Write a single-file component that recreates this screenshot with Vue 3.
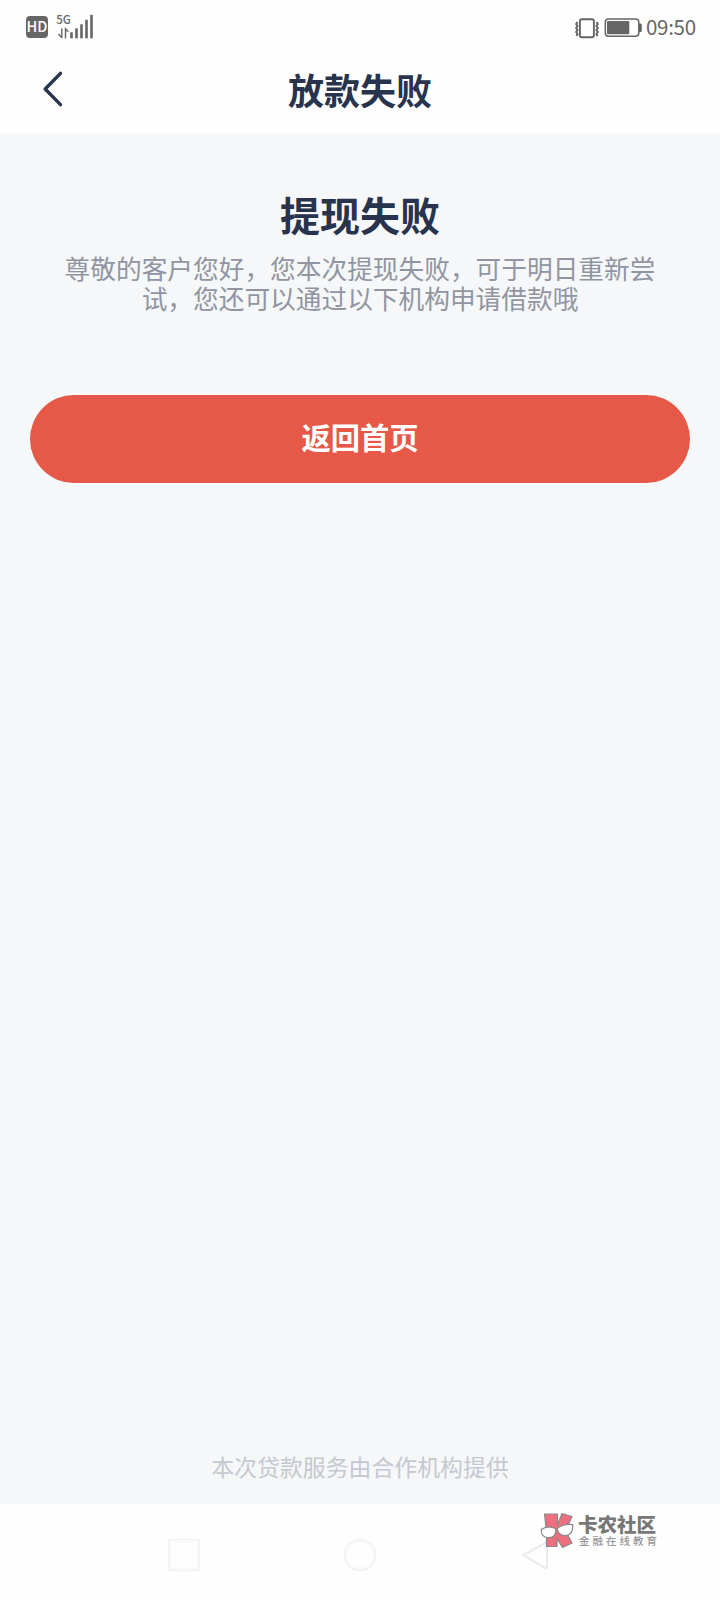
<template>
  <div class="page">
    <!-- 状态栏 -->
    <div class="status">
      <svg class="status-left" width="80" height="32" viewBox="0 0 80 32">
        <rect x="6" y="4" width="22" height="22" rx="4" fill="#666" />
        <text x="17" y="20" text-anchor="middle" class="hd">HD</text>
        <text x="36.3" y="12" class="net">5G</text>
        <path d="M41.8 16.500v9.700M38.500 22l3.300 3.500M45.500 26.500v-9.700l2.800 3" fill="none" stroke="#666" stroke-width="1.4" />
        <path v-for="(h, i) in bars" :key="i" :d="`M${51.5 + i * 5} 26.3v-${h}`" stroke="#666" stroke-width="2.6" />
      </svg>
      <div class="status-right">
        <svg width="72" height="24" viewBox="0 0 72 24">
          <rect x="5.9" y="4.2" width="14" height="18" rx="2" fill="none" stroke="#666" stroke-width="1.9" />
          <path d="M3.500 7l-1.300 2 1.300 2-1.300 2 1.300 2-1.300 2 1.300 2-1 2M22.500 7l1.300 2-1.300 2 1.300 2-1.300 2 1.300 2-1.300 2 1 2" fill="none" stroke="#666" stroke-width="2" />
          <rect x="31.3" y="4" width="33.5" height="17.2" rx="3.2" fill="none" stroke="#666" stroke-width="1.5" />
          <rect x="33" y="6" width="22.3" height="13.3" rx="1" fill="#666" />
          <path d="M65 8.500h1.500q1.300 0 1.300 1.300v6q0 1.300-1.300 1.300h-1.500z" fill="#666" />
        </svg>
        <span class="time">{{ time }}</span>
      </div>
    </div>

    <!-- 标题栏 -->
    <header class="nav">
      <button class="back" type="button">
        <svg width="24" height="38" viewBox="0 0 24 38">
          <path d="M19.500 3.400L4.200 19l15.300 15.600" fill="none" stroke="#28334d" stroke-width="3.400" stroke-linecap="round" stroke-linejoin="round" />
        </svg>
      </button>
      <h1>放款失败</h1>
    </header>

    <main class="content">
      <h2>提现失败</h2>
      <p class="desc">尊敬的客户您好，您本次提现失败，可于明日重新尝试，您还可以通过以下机构申请借款哦</p>
      <button class="home" type="button">返回首页</button>
      <p class="tip">本次贷款服务由合作机构提供</p>
    </main>

    <!-- 底部导航键 -->
    <footer class="keys">
      <svg width="34" height="34" viewBox="0 0 34 34">
        <rect x="1.500" y="1.500" width="31" height="31" rx="2" class="faint" />
        <rect x="3.500" y="3.500" width="27" height="27" class="fainter" />
      </svg>
      <svg width="34" height="34" viewBox="0 0 34 34">
        <circle cx="17" cy="17" r="15.500" class="faint" />
        <circle cx="17" cy="17" r="13.800" class="fainter" />
      </svg>
      <svg width="34" height="34" viewBox="0 0 34 34">
        <path d="M28 4L4.500 17 26 30q2 .8 2-1z" class="faint tri" />
      </svg>
      <div class="mark">
        <svg width="36" height="38" viewBox="0 0 36 38">
          <path d="M5.500 3h13v11L23 2.500l10 3L26.500 20l6.500 12-9.500 4.500-5.500-9v8H7.500V20z" fill="#ee7080" stroke="#888" stroke-width="1.200" stroke-linejoin="round" />
          <path d="M2.200 18.500q7-4.800 14.600-.8.800 8.800-7 9-7.800 0-7.600-8.200z" fill="#fff" stroke="#888" stroke-width="1.200" />
          <path d="M18.200 17.500q6.500-5.500 15.500-3.800.8 9.800-7 10.800-7.500.5-8.500-7z" fill="#fff" stroke="#888" stroke-width="1.200" />
        </svg>
        <div class="mark-text">
          <strong>卡农社区</strong>
          <span>金融在线教育</span>
        </div>
      </div>
    </footer>
  </div>
</template>

<script setup>
import { ref } from 'vue'

const time = ref('09:50')
// 信号格高度
const bars = [6, 10, 14, 18.500, 23.500]
</script>

<style>
body {
  margin: 0;
  background: #fff;
}
</style>

<style scoped>
.page {
  display: flex;
  flex-direction: column;
  width: 720px;
  height: 1600px;
  overflow: hidden;
  background: #fefefe;
  color: #28334d;
  font-family: "Noto Sans CJK SC", sans-serif;
}
h1, h2, p {
  margin: 0;
}
button {
  border: 0;
  padding: 0;
  font-family: inherit;
}
.status {
  display: flex;
  justify-content: space-between;
  box-sizing: border-box;
  height: 50px;
  padding: 12px 24px 0 20px;
}
.hd {
  font: 500 14.500px "Noto Sans CJK SC", sans-serif;
  fill: #fff;
}
.net {
  font: 500 11.500px "Noto Sans CJK SC", sans-serif;
  fill: #666;
}
.status-right {
  display: flex;
  align-items: center;
  height: 30px;
}
.time {
  width: 50px;
  padding-bottom: 2px;
  color: #666;
  font: 20.500px/30px "Noto Sans CJK SC", sans-serif;
  letter-spacing: -0.300px;
  white-space: nowrap;
}
.nav {
  display: grid;
  grid-template-columns: 120px 1fr 120px;
  align-items: center;
  height: 83px;
}
.back {
  display: flex;
  justify-self: start;
  margin: -6px 0 0 41px;
  background: none;
}
h1 {
  padding-bottom: 6px;
  font-size: 36px;
  font-weight: 700;
  line-height: 44px;
  text-align: center;
}
.content {
  display: flex;
  flex-direction: column;
  box-sizing: border-box;
  height: 1371px;
  padding: 57px 30px 22px;
  background: #f5f7f9;
  text-align: center;
}
h2 {
  font-size: 40px;
  font-weight: 700;
  line-height: 48px;
}
.desc {
  width: 600px;
  margin: 15px auto 0;
  color: #9095a1;
  font-size: 25.700px;
  line-height: 30px;
}
.home {
  height: 88px;
  margin-top: 82px;
  padding-bottom: 7px;
  border-radius: 44px;
  background: #e65948;
  color: #fff;
  font-size: 29.300px;
  font-weight: 700;
}
.tip {
  margin-top: auto;
  color: #c5c8d1;
  font-size: 22.900px;
  line-height: 32px;
}
.keys {
  position: relative;
  display: flex;
  justify-content: space-between;
  height: 62px;
  padding: 34px 167px 0;
}
.faint {
  fill: none;
  stroke: #f1f1f1;
  stroke-width: 1.500;
}
.fainter {
  fill: none;
  stroke: #f7f7f7;
  stroke-width: 1;
}
.tri {
  stroke: #ebebeb;
  stroke-width: 2;
}
/* 盖在返回键上的社区水印 */
.mark {
  position: absolute;
  top: 7px;
  left: 539px;
  display: flex;
}
.mark-text {
  display: flex;
  flex-direction: column;
  color: #777;
  white-space: nowrap;
}
.mark-text strong {
  margin: 1px 0 0 3px;
  font-size: 19.500px;
  font-weight: 900;
  line-height: 23px;
}
.mark-text span {
  margin: 0 0 0 4px;
  color: #999;
  font-size: 10.500px;
  font-weight: 500;
  letter-spacing: 3px;
  line-height: 12px;
}
</style>
